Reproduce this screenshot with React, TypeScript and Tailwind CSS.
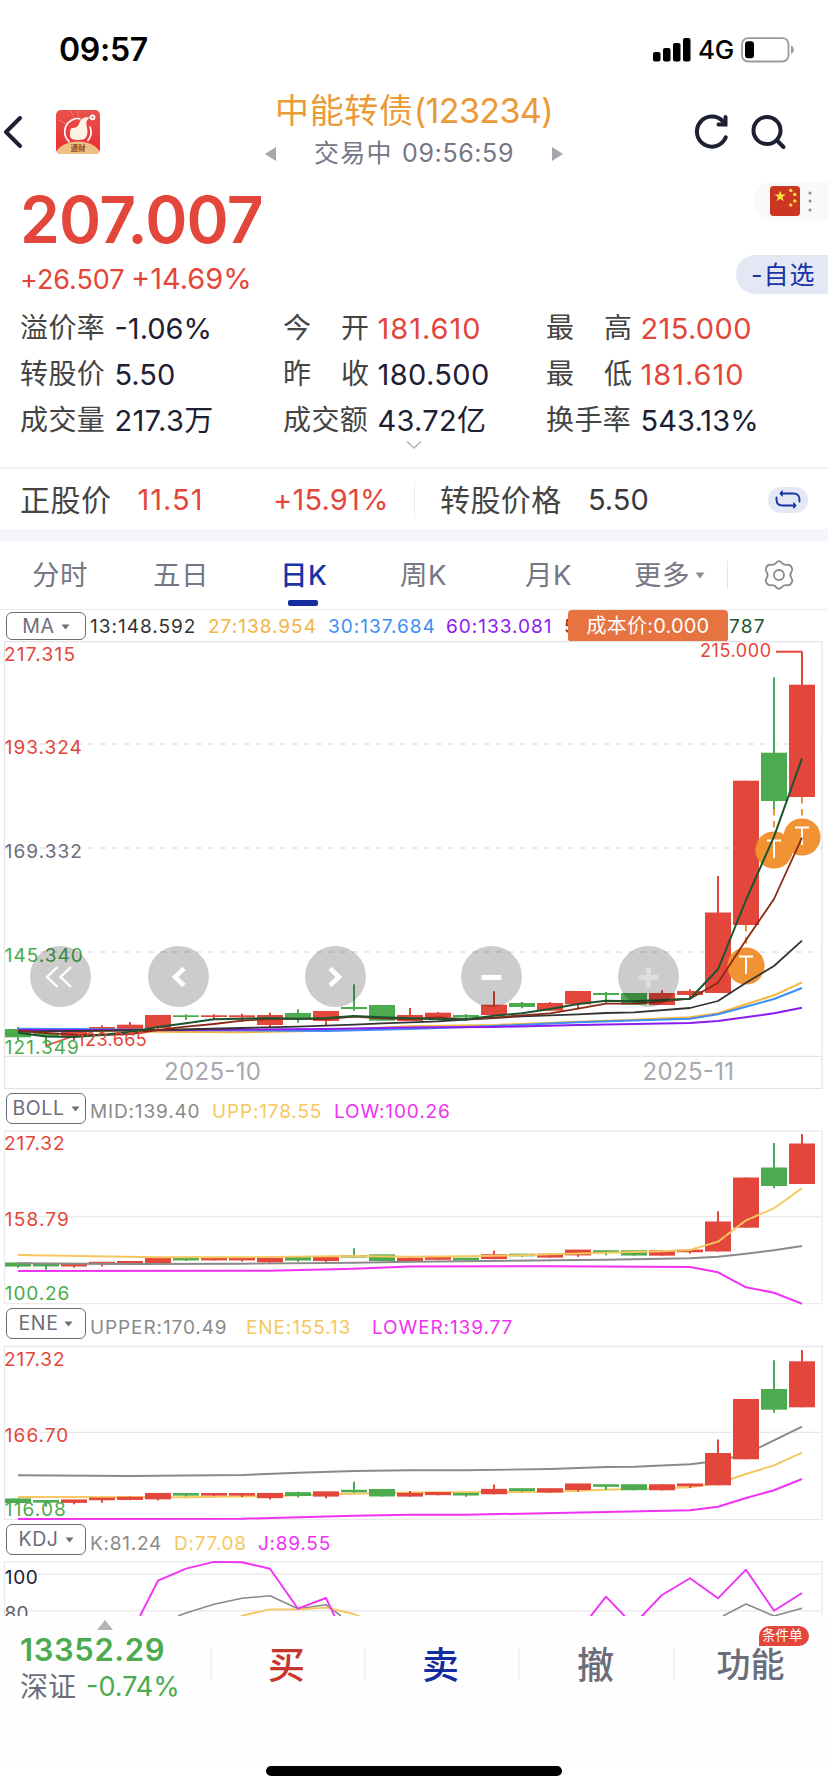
import type { ReactNode } from "react";

const RED = "#e3463a";
const GREEN = "#4cab4e";
const MAGENTA = "#f032f5";
const GOLD = "#f6c75e";
const GREY = "#8a8a8a";

type Candle = { up: boolean; top: number; bottom: number; high: number; low: number };
const c = (up: boolean, top: number, bottom: number, high: number = top, low: number = bottom): Candle => ({ up, top, bottom, high, low });

const candles: Candle[] = [
  c(false, 1029, 1037.3, 1027, 1040),
  c(false, 1033, 1036, 1032, 1046),
  c(true, 1031.5, 1037, 1031, 1040),
  c(true, 1027, 1030, 1025.3, 1036),
  c(true, 1024.7, 1029.5, 1022),
  c(true, 1015, 1028, 1015, 1030),
  c(false, 1015.3, 1017, 1014.3, 1020),
  c(true, 1015.3, 1017, 1014.3, 1019),
  c(true, 1015.3, 1017.3, 1013.7, 1022),
  c(true, 1015, 1025, 1012.7, 1027.7),
  c(false, 1013, 1019.5, 1009.3, 1022.7),
  c(true, 1011, 1021, 1011, 1025),
  c(false, 1007, 1009, 984.3, 1010.7),
  c(false, 1005, 1020.7),
  c(true, 1015, 1021, 1008),
  c(true, 1012.7, 1017.3, 1012),
  c(false, 1015, 1017.5, 1014, 1021),
  c(true, 1004.7, 1015, 991.3),
  c(false, 1003, 1007, 1002, 1008.3),
  c(true, 1003, 1010.7, 1002),
  c(true, 991, 1004.3, 991, 1008),
  c(false, 993, 995, 992, 1003),
  c(false, 993, 1004.7),
  c(true, 993, 1005, 990.3),
  c(true, 991, 995, 989.3, 998.3),
];
const mainTail: Candle[] = [
  c(true, 912.5, 993, 876),
  c(true, 780.7, 925),
  c(false, 752.7, 801, 677.3, 809),
  c(true, 684.7, 797, 651.7),
];
const bollTail: Candle[] = [
  c(true, 1221.5, 1251.5, 1211.3),
  c(true, 1177.5, 1227.7),
  c(false, 1167.5, 1186, 1143, 1188.3),
  c(true, 1143.5, 1184, 1134),
];
const eneTail: Candle[] = [
  c(true, 1453, 1485.3, 1439.5),
  c(true, 1399, 1459.3),
  c(false, 1389, 1409.7, 1360.3, 1412.7),
  c(true, 1361.3, 1407.3, 1350),
];
const rescale = (base: number, k: number) =>
  candles.map((d) => {
    const f = (y: number) => base + (y - 640) * k;
    return { up: d.up, top: f(d.top) - 0.9, bottom: Math.max(f(d.bottom) + 0.4, f(d.top) + 1.7), high: f(d.high), low: f(d.low) + 0.6 };
  });

function Candles({ data }: { data: Candle[] }) {
  return (
    <g>
      {data.map((d, i) => {
        const x = 18 + i * 28;
        return (
          <g key={i} fill={d.up ? RED : GREEN}>
            <rect x={x - 1} y={d.high} width={2} height={d.low - d.high} />
            <rect x={x - 13} y={d.top} width={26} height={d.bottom - d.top} />
          </g>
        );
      })}
    </g>
  );
}

function Line({ pts, color, w = 1.6 }: { pts: string; color: string; w?: number }) {
  return <polyline points={pts} fill="none" stroke={color} strokeWidth={w} strokeLinejoin="round" />;
}

function Label({ x, y, len, color, size = 19, children }: { x: number; y: number; len: number; color: string; size?: number; children: string }) {
  return (
    <text x={x} y={y} textLength={len} fontSize={size} fill={color}>
      {children}
    </text>
  );
}

const tSpots = [
  [774, 850],
  [802, 837],
  [746, 966],
];

function MainChart() {
  return (
    <svg className="block h-[449px] w-full" viewBox="0 641 828 449">
      <g stroke="#e3e3e6" strokeWidth="1.2" fill="none">
        <path d="M4.5 641.6H822V1088.5H4.5ZM4.5 1056.3H822" />
        <path d="M4 744H822M4 848H822M4 952H822" strokeDasharray="6 6" strokeWidth="1.6" />
      </g>
      <Candles data={[...candles, ...mainTail]} />
      <path d="M776 651.7H802" stroke={RED} strokeWidth="2" />
      <path d="M46 1045.5L74 1036" stroke={RED} strokeWidth="1.5" />
      <path d="M774 809V832M802 797V820M746 925V948" stroke="#f19333" strokeWidth="2" strokeDasharray="6.5 5.5" />
      {tSpots.map(([x, y]) => (
        <g key={x}>
          <circle cx={x} cy={y} r="18.6" fill="#f19333" />
          <path d={`M${x - 7} ${y - 9.5}h14M${x} ${y - 9.5}v17.5`} stroke="#fff" strokeWidth="2" />
        </g>
      ))}
      <Line color="#f7b53c" w={2} pts="18,1030 74,1031 158,1031.7 242,1032.3 326,1030.7 410,1026.3 494,1025 578,1021.7 634,1019.7 690,1017.3 718,1013.3 746,1004.3 774,995.3 802,982.3" />
      <Line color="#3d8ff5" w={2} pts="18,1028.7 74,1029 158,1030 326,1031 410,1029 494,1026 578,1022.3 690,1018.7 718,1014.3 746,1006.7 774,999 802,988" />
      <Line color="#8a1cf0" w={2} pts="18,1030 158,1030.3 326,1029 410,1027.5 494,1027 578,1025 690,1023 718,1021 774,1013.3 802,1007.7" />
      <Line color="#333333" w={1.8} pts="18,1031.7 74,1031 158,1030 242,1028 298,1026.7 326,1025.7 354,1024.7 382,1023.3 410,1022.3 438,1021.3 466,1019.5 494,1018 522,1016.3 578,1014.3 606,1013 634,1012.3 690,1008 718,1001 746,982.7 774,966 802,940.7" />
      <Line color="#8a2a16" w={1.8} pts="18,1030.7 46,1033 74,1034.7 102,1035 130,1034 158,1030 186,1026.7 214,1024 242,1020.7 270,1019 298,1018.7 326,1019 354,1016.7 382,1018.3 410,1019 438,1017.5 466,1019.3 494,1017.7 522,1015.3 550,1013.3 578,1008.7 606,1003.7 634,1003.7 662,1001.3 690,998.7 718,982.7 746,940 774,899 802,837.7" />
      <Line color="#1c5430" w={2} pts="18,1032.7 46,1036.5 74,1037 102,1035 130,1032 158,1027 186,1023.3 214,1019.3 242,1018.7 270,1018 298,1019 326,1018 354,1016 382,1017.3 410,1018.3 438,1019.3 466,1019.3 494,1015.7 522,1013.3 550,1009 578,1004 606,1000.7 634,1001.3 662,1000 690,998.7 718,969.3 746,900 774,836.7 802,758.3" />
      <Label x={4} y={661.3} len={71} color={RED}>217.315</Label>
      <Label x={4.8} y={753.5} len={77} color={RED}>193.324</Label>
      <Label x={4.8} y={857.5} len={77} color="#6b6d7b">169.332</Label>
      <Label x={4.8} y={961.5} len={78} color={GREEN}>145.340</Label>
      <Label x={4.8} y={1053.5} len={74} color={GREEN}>121.349</Label>
      <Label x={77.3} y={1045.5} len={69.5} size={18} color={RED}>123.665</Label>
      <Label x={700} y={657.3} len={71} size={18} color={RED}>215.000</Label>
      <Label x={164} y={1079.7} len={97} size={24} color="#a7a8b0">2025-10</Label>
      <Label x={642.5} y={1079.7} len={91.5} size={24} color="#a7a8b0">2025-11</Label>
    </svg>
  );
}

function Round({ children, className }: { children: ReactNode; className: string }) {
  return (
    <button className={"absolute top-[305px] flex size-[61px] items-center justify-center rounded-full bg-black/20 " + className}>
      <svg width="61" height="61" viewBox="0 0 61 61" fill="none" stroke="#fff">
        {children}
      </svg>
    </button>
  );
}

function BollChart() {
  return (
    <svg className="block h-[175px] w-full" viewBox="0 1130 828 175">
      <path d="M4.5 1131H822V1303.7H4.5ZM4.5 1216.5H822" stroke="#ebebee" strokeWidth="1.3" fill="none" />
      <Candles data={[...rescale(1131.5, 0.339), ...bollTail]} />
      <Line color={GREY} w={1.9} pts="18,1263.3 130,1264 242,1263.7 354,1262.7 410,1261.7 606,1259.7 690,1258.3 718,1256.7 746,1253.7 774,1250.3 802,1246" />
      <Line color={GOLD} w={1.9} pts="18,1255 158,1257.3 242,1257.3 354,1256 410,1256.7 466,1256.3 522,1255.3 550,1254.3 606,1252.7 662,1251.3 690,1250 718,1241.7 746,1220.3 774,1208.3 802,1188.3" />
      <Line color={MAGENTA} w={2} pts="18,1271 270,1270.7 354,1268.7 410,1266.5 550,1266.3 690,1267 718,1272.3 746,1287.3 774,1292.7 802,1303.7" />
      <Label x={4} y={1150.3} len={60.5} color={RED}>217.32</Label>
      <Label x={4.8} y={1226} len={64} color={RED}>158.79</Label>
      <Label x={4.8} y={1299.7} len={64.5} color={GREEN}>100.26</Label>
    </svg>
  );
}

function EneChart() {
  return (
    <svg className="block h-[176px] w-full" viewBox="0 1345 828 176">
      <path d="M4.5 1346.4H822V1519.5H4.5ZM4.5 1432.4H822" stroke="#e8e8eb" strokeWidth="1.2" fill="none" />
      <Line color={GREY} w={1.9} pts="18,1475.3 130,1476 242,1475 298,1472.7 354,1471 410,1470.3 466,1470.3 550,1469 606,1467 634,1466.7 690,1464.3 718,1461 746,1454 774,1440.3 802,1426.7" />
      <Line color={GOLD} w={1.9} pts="18,1497 186,1497.3 270,1496 354,1493.7 410,1492.5 550,1491.7 606,1489.7 690,1487.3 718,1483.3 746,1474 774,1465.3 802,1452.7" />
      <Line color={MAGENTA} w={2} pts="18,1519 242,1518.7 354,1515.7 410,1514.8 466,1514.7 606,1512 690,1510.3 718,1506.7 746,1498 774,1490.3 802,1479" />
      <Candles data={[...rescale(1346, 0.3942), ...eneTail]} />
      <Label x={4} y={1366} len={60.5} color={RED}>217.32</Label>
      <Label x={4.8} y={1441.7} len={63.5} color={RED}>166.70</Label>
      <Label x={4.8} y={1515.7} len={61} color={GREEN}>116.08</Label>
    </svg>
  );
}

function KdjChart() {
  return (
    <svg className="block h-[56px] w-full" viewBox="0 1560 828 56">
      <path d="M4.5 1620V1561.8H822V1620M4.5 1574H822M4.5 1610.8H822" stroke="#ebebee" strokeWidth="1.4" fill="none" />
      <Line color={GREY} pts="178,1616 186,1613 214,1604.3 242,1598.3 270,1595.7 298,1608.7 326,1604.7 341,1616" />
      <Line color={GREY} pts="723,1616 746,1604 774,1616 802,1608.3" />
      <Line color={GOLD} w={1.8} pts="241,1616 270,1609.3 298,1609.3 326,1607.7 354,1614 360,1616.5" />
      <Line color={MAGENTA} w={1.9} pts="140,1616 158,1580.7 186,1568.7 214,1561.9 242,1562.3 270,1568.7 298,1608.7 326,1598 335,1617" />
      <Line color={MAGENTA} w={1.9} pts="590,1617 606,1596.7 625.5,1617" />
      <Line color={MAGENTA} w={1.9} pts="641,1617 662,1595 690,1578.3 718,1598.3 746,1569.7 774,1610.7 802,1593" />
      <Label x={4.8} y={1583.5} len={33} color="#1d2033">100</Label>
      <Label x={4.5} y={1619.5} len={24} color="#5b5d6b">80</Label>
    </svg>
  );
}

function Picker({ children, className }: { children: string; className: string }) {
  return (
    <button className={"ml-[6px] flex w-[80px] shrink-0 items-center justify-center gap-[6px] rounded-[6px] border-[1.5px] border-[#6b6d7b] pt-[1px] text-[19.5px] tracking-[0.6px] text-[#6b6d7b] " + className}>
      {children}
      <svg width="9" height="6" viewBox="0 0 9 6">
        <path d="M0.5 0.5h8l-4 5z" fill="#6b6d7b" />
      </svg>
    </button>
  );
}

function IndicatorRow({ name, height, track, items }: { name: string; height: string; track: string; items: [string, string][] }) {
  return (
    <div className={"flex items-start " + height}>
      <Picker className="mt-[3px] h-[31px]">{name}</Picker>
      <div className={"flex h-[40px] items-center whitespace-nowrap pl-[4px] text-[19px] " + track}>
        {items.map(([text, cell]) => (
          <span key={text} className={cell}>{text}</span>
        ))}
      </div>
    </div>
  );
}

function Stat({ label, value, cls }: { label: string; value: string; cls: string }) {
  return (
    <div className="flex h-[46px] items-center whitespace-nowrap text-[28px]">
      <span className="flex w-[94.5px] text-[#444444]">
        {label.length === 2 ? (
          <span className="flex w-[86px] justify-between">
            <span>{label[0]}</span>
            <span>{label[1]}</span>
          </span>
        ) : (
          <span className="tracking-[0.4px]">{label}</span>
        )}
      </span>
      <span className={"text-[29px] " + cls}>{value}</span>
    </div>
  );
}

export default function App() {
  return (
    <div className="relative h-[1792px] w-[828px] overflow-hidden whitespace-nowrap bg-white font-[Inter,'Noto_Sans_CJK_SC',sans-serif] leading-none">
      <header className="flex h-[88px] items-center justify-between pl-[59px] pr-[33px] pt-[12px]">
        <span className="text-[32px] font-semibold tracking-[-0.3px]">09:57</span>
        <div className="flex items-center">
          <svg width="38" height="24" viewBox="0 0 38 24">
            <rect x="0" y="14" width="7.5" height="9.5" rx="2" />
            <rect x="10" y="10" width="7.5" height="13.5" rx="2" />
            <rect x="20" y="5" width="7.5" height="18.5" rx="2" />
            <rect x="30" y="0" width="7.5" height="23.5" rx="2" />
          </svg>
          <span className="ml-[7px] w-[43px] text-[26px] font-medium tracking-[-0.3px]">4G</span>
          <svg width="54" height="26" viewBox="0 0 54 26">
            <rect x="1" y="1.2" width="46.5" height="23.3" rx="6" fill="none" stroke="#9b9b9b" strokeWidth="1.8" />
            <rect x="4" y="4.3" width="9" height="17" rx="3" />
            <path d="M50 8.5c3.8 1.6 3.8 7 0 8.6z" fill="#9b9b9b" />
          </svg>
        </div>
      </header>

      <nav className="flex h-[88px] items-center">
        <div className="flex w-[265px] items-center">
          <svg width="56" height="44" viewBox="0 0 56 44" fill="none" stroke="#1d2033" strokeWidth="4" strokeLinecap="round" strokeLinejoin="round">
            <path d="M20 8L6 22l14 14" />
          </svg>
          <svg width="44" height="44" viewBox="0 0 44 44">
            <defs>
              <linearGradient id="app" x1="0" y1="0" x2="0" y2="1">
                <stop offset="0" stopColor="#e8524a" />
                <stop offset="1" stopColor="#ee2b34" />
              </linearGradient>
              <clipPath id="appClip"><rect width="44" height="44" rx="5" /></clipPath>
            </defs>
            <g clipPath="url(#appClip)">
              <rect width="44" height="44" fill="url(#app)" />
              <path d="M14 0l4 7M22 0v6M3 10l7 4" stroke="#f58a7d" strokeWidth="0.8" />
              <ellipse cx="22" cy="45" rx="22" ry="13.5" fill="#f0c083" />
              <path d="M13.5 32A13.2 13.2 0 0 1 24.5 8.8M33.8 16.5A13.2 13.2 0 0 1 31.5 31" fill="none" stroke="#fff" strokeWidth="1.7" />
              <path d="M14.5 20c0-1.500 1.500-2.200 4-2.200 2.500 0 4-2.300 5-5 1-4.300 5.500-6.300 10-5.300-3 2.500-3.500 5-3 8 1.300 4 1.300 9-.5 12-2 3-10 3-14 1.500-2.500-1.500-2.500-5-1.500-9z" fill="#fff3e6" />
              <circle cx="36.5" cy="7.3" r="2.9" fill="#fff" />
              <circle cx="36.5" cy="7.3" r="1.1" fill="#e8524a" />
              <text x="22" y="41" fontSize="7.5" fontWeight="700" textAnchor="middle" fill="#8a4a2a">通财</text>
            </g>
          </svg>
        </div>
        <div className="w-[298px]">
          <div className="flex h-[44px] items-center justify-center text-[34px] text-[#ea9a38]">
            <span className="tracking-[0.7px]">中能转债</span>
            <span className="tracking-[-0.6px]">(123234)</span>
          </div>
          <div className="flex h-[43px] items-center justify-between text-[25px] text-[#757785]">
            <svg width="11" height="14" viewBox="0 0 11 14"><path d="M11 0v14L0 7z" fill="#a6a7ae" /></svg>
            <span className="flex w-[200px] justify-between pb-[1px]">
              <span className="tracking-[1.3px]">交易中</span>
              <span className="tracking-[0.6px]">09:56:59</span>
            </span>
            <svg width="11" height="14" viewBox="0 0 11 14"><path d="M0 0v14l11-7z" fill="#a6a7ae" /></svg>
          </div>
        </div>
        <div className="flex pl-[129px]">
          <svg width="40" height="40" viewBox="0 0 40 40" fill="none" stroke="#1d2033" strokeWidth="4" strokeLinecap="round">
            <path d="M33.8 25.3A15 15 0 1 1 31 9.5" />
            <path d="M33.5 5v7.5H26.5" strokeLinejoin="miter" />
          </svg>
          <svg className="ml-[17px]" width="40" height="40" viewBox="0 0 40 40" fill="none" stroke="#1d2033" strokeWidth="4" strokeLinecap="round">
            <circle cx="18" cy="18.5" r="13.5" />
            <path d="M28 28.5l6.5 6.5" />
          </svg>
        </div>
      </nav>

      <section className="flex h-[129px] justify-between">
        <div className="pl-[20px]">
          <div className="flex h-[87px] items-center text-[64px] font-semibold tracking-[-0.8px] text-[#e3463a]">207.007</div>
          <div className="flex h-[34px] items-baseline text-[#e3463a]">
            <span className="w-[111px] text-[27px] leading-[34px] tracking-[-0.05px]">+26.507</span>
            <span className="text-[29px] tracking-[0px]">+14.69%</span>
          </div>
        </div>
        <div className="flex flex-col items-end pt-[6px]">
          <div className="flex h-[38px] w-[74px] items-center rounded-l-full bg-[#f9f9fa] pl-[16px]">
            <svg width="30" height="30" viewBox="0 0 30 30" fill="#fddf3f">
              <rect width="30" height="30" rx="3.5" fill="#cb3622" />
              <path d="M10.2 4.5l1.4 4h4.3l-3.4 2.6 1.2 4.2-3.5-2.5-3.5 2.5 1.2-4.2-3.4-2.6h4.3z" />
              <path d="M20.5 2.5l2 1.4-.3 2.1-2.2.1-1.2-1.9zM24.5 6.5l2 1.4-.3 2.1-2.2.1-1.2-1.9zM24.5 13l2 1.4-.3 2.1-2.2.1-1.2-1.9zM20.5 17l2 1.4-.3 2.1-2.2.1-1.2-1.9z" />
            </svg>
            <svg className="ml-[8px]" width="4" height="24" viewBox="0 0 4 24" fill="#8e8e93">
              <circle cx="2" cy="4" r="1.5" />
              <circle cx="2" cy="12" r="1.5" />
              <circle cx="2" cy="21" r="1.5" />
            </svg>
          </div>
          <div className="mt-[35px] flex h-[39px] w-[92px] items-center rounded-l-full bg-[#e4e8f4] pl-[15px] pt-[2px] text-[25px] tracking-[1px] text-[#1733a5]">-自选</div>
        </div>
      </section>

      <section className="grid grid-cols-[263px_263px_1fr] pl-[20px]">
        <Stat label="溢价率" value="-1.06%" cls="text-[#1d2033]" />
        <Stat label="今开" value="181.610" cls="tracking-[0.95px] text-[#e3463a]" />
        <Stat label="最高" value="215.000" cls="tracking-[0.35px] text-[#e3463a]" />
        <Stat label="转股价" value="5.50" cls="text-[#1d2033]" />
        <Stat label="昨收" value="180.500" cls="tracking-[0.4px] text-[#1d2033]" />
        <Stat label="最低" value="181.610" cls="tracking-[0.95px] text-[#e3463a]" />
        <Stat label="成交量" value="217.3万" cls="tracking-[0.4px] text-[#1d2033]" />
        <Stat label="成交额" value="43.72亿" cls="tracking-[0.3px] text-[#1d2033]" />
        <Stat label="换手率" value="543.13%" cls="tracking-[0.1px] text-[#1d2033]" />
      </section>
      <div className="flex h-[24px] justify-center">
        <svg className="-mt-[3px]" width="18" height="10" viewBox="0 0 18 10" fill="none" stroke="#b3b3b3" strokeWidth="1.5"><path d="M2 1.5l7 6.5 7-6.5" /></svg>
      </div>

      <div className="flex h-[62px] items-center border-t-2 border-[#f3f3f6] pt-[1px] text-[29px]">
        <span className="w-[117px] pl-[20px] text-[30px] tracking-[0.5px] text-[#444444]">正股价</span>
        <span className="w-[137px] pl-[20.5px] tracking-[1px] text-[#e3463a]">11.51</span>
        <span className="w-[160px] pl-[19px] tracking-[0.2px] text-[#e3463a]">+15.91%</span>
        <span className="h-[36px] w-[1px] bg-[#ececf0]" />
        <span className="w-[173px] pl-[25px] text-[30px] tracking-[0.4px] text-[#444444]">转股价格</span>
        <span className="w-[180px] text-[#3a3a3a]">5.50</span>
        <span className="flex h-[26px] w-[40px] items-center justify-center rounded-full bg-[#e4e8f4]">
          <svg width="28" height="22" viewBox="0 0 28 22" fill="none" stroke="#1733a5" strokeWidth="1.9" strokeLinecap="round">
            <path d="M2.5 8.5v2c0 4 2.5 6 6 6H21M25.5 12.5v-2c0-4-2.5-6-6-6H7" />
            <path d="M8 2L6 4.5 8 7zM20 14l2 2.5-2 2.5z" fill="#1733a5" strokeWidth="1" />
          </svg>
        </span>
      </div>
      <div className="h-[12px] bg-[#f4f6fb]" />

      <div className="flex h-[69px] items-center border-b border-[#ebebee] text-[27.5px] tracking-[0.6px] text-[#757785]">
        <span className="w-[120px] pl-[32px] pt-[1px]">分时</span>
        <span className="w-[160px] pl-[33px] pt-[1px]">五日</span>
        <span className="relative flex h-full w-[120px] items-center pt-[1px] font-medium text-[#1733a5]">
          日K
          <i className="absolute bottom-[3px] left-[8px] h-[6px] w-[30px] rounded-[2px] bg-[#132da0]" />
        </span>
        <span className="w-[125px] pt-[1px]">周K</span>
        <span className="w-[109px] pt-[1px]">月K</span>
        <span className="flex w-[93px] items-center gap-[5px] pt-[1px]">
          更多
          <svg width="10" height="7" viewBox="0 0 10 7"><path d="M0.5 0.5h9l-4.5 6z" fill="#8e8e96" /></svg>
        </span>
        <span className="h-[28px] w-[1px] bg-[#e5e5ea]" />
        <svg className="ml-[35px]" width="32" height="32" viewBox="0 0 32 32" fill="none" stroke="#8a8a8e" strokeWidth="1.8" strokeLinejoin="round">
          <path d="M13.4 3.6Q16 .8 18.6 3.6Q20.3 6.3 23.5 5.8Q27.5 5.2 28.9 8.8Q30 11 28.3 13Q26.4 16 28.3 19Q30 21 28.9 23.2Q27.5 26.8 23.5 26.2Q20.3 25.7 18.6 28.4Q16 31.2 13.4 28.4Q11.7 25.7 8.5 26.2Q4.5 26.8 3.1 23.2Q2 21 3.7 19Q5.6 16 3.7 13Q2 11 3.1 8.8Q4.5 5.2 8.5 5.8Q11.7 6.3 13.4 3.6Z" />
          <circle cx="16" cy="16" r="5" />
        </svg>
      </div>

      <div className="relative flex h-[31px] items-start">
        <Picker className="mt-[2px] h-[28px]">MA</Picker>
        <div className="flex h-[31px] items-center pl-[4px] pt-[1px] text-[19px] tracking-[1px]">
          <span className="w-[118px] text-[#333333]">13:148.592</span>
          <span className="w-[120px] text-[#f4b43f]">27:138.954</span>
          <span className="w-[118px] text-[#3d8ff5]">30:137.684</span>
          <span className="w-[118px] text-[#8a1cf0]">60:133.081</span>
          <span className="text-[#8a2a16]">5</span>
        </div>
        <span className="absolute left-[568px] top-0 flex h-[32px] w-[160px] items-center justify-center rounded-[4px] bg-[#e77340] text-[20px] tracking-[0.2px] text-white">成本价:0.000</span>
        <span className="absolute left-[729px] top-0 flex h-[31px] items-center pt-[1px] text-[19px] tracking-[1.2px] text-[#1c5430]">787</span>
      </div>

      <div className="relative">
        <MainChart />
        <Round className="left-[30px]"><path d="M27.5 21L17 31l10.5 10M41 21L30.5 31 41 41" strokeWidth="2.4" /></Round>
        <Round className="left-[148px]"><path d="M36 22.5L27 31l9 8.5" strokeWidth="4.5" /></Round>
        <Round className="left-[305px]"><path d="M25 22.5L34 31l-9 8.5" strokeWidth="4.5" /></Round>
        <Round className="left-[461px]"><path d="M20.5 31.5h20" strokeWidth="5" /></Round>
        <Round className="left-[618px]"><path d="M20.5 31.5h20M30.5 21.5v20" stroke="#dedede" strokeWidth="5" /></Round>
      </div>

      <IndicatorRow
        name="BOLL"
        height="h-[40px]"
        track="pt-[3px] tracking-[0.85px]"
        items={[["MID:139.40", "w-[122px] text-[#8a8a8a]"], ["UPP:178.55", "w-[122px] text-[#f6c75e]"], ["LOW:100.26", "text-[#f032f5]"]]}
      />
      <BollChart />
      <IndicatorRow
        name="ENE"
        height="h-[40px]"
        track="pt-[4px] tracking-[0.9px]"
        items={[["UPPER:170.49", "w-[156px] text-[#8a8a8a]"], ["ENE:155.13", "w-[126px] text-[#f6c75e]"], ["LOWER:139.77", "text-[#f032f5]"]]}
      />
      <EneChart />
      <IndicatorRow
        name="KDJ"
        height="h-[39px]"
        track="pt-[4px] tracking-[0.75px]"
        items={[["K:81.24", "w-[84px] text-[#8a8a8a]"], ["D:77.08", "w-[84px] text-[#f6c75e]"], ["J:89.55", "text-[#f032f5]"]]}
      />
      <KdjChart />

      <footer className="flex h-[150px] items-start bg-[#fefefe]">
        <div className="w-[210px] pl-[20px]">
          <svg className="ml-[77px] mt-[4px] block" width="16" height="10" viewBox="0 0 16 10"><path d="M8 0l8 10H0z" fill="#b4b4b4" /></svg>
          <div className="flex h-[38px] items-center text-[31px] font-semibold tracking-[0.6px] text-[#4cab4e]">13352.29</div>
          <div className="flex h-[37px] items-center text-[27px] text-[#6b6d7b]">
            <span className="w-[66px] text-[28px]">深证</span>
            <span className="text-[#4cab4e]">-0.74%</span>
          </div>
        </div>
        <div className="mt-[32px] flex h-[32px] flex-1 text-[37px] font-medium">
          <span className="flex w-[154px] items-center justify-center border-l-2 border-[#f4f4f8] pr-[3px] pt-[2px] text-[#c8352c]">买</span>
          <span className="flex w-[154px] items-center justify-center border-l-2 border-[#f4f4f8] pr-[3px] pt-[2px] text-[#132da0]">卖</span>
          <span className="flex w-[155px] items-center justify-center border-l-2 border-[#f4f4f8] pr-[2px] pt-[2px] text-[#6b6d7b]">撤</span>
          <span className="relative flex w-[154px] items-center justify-center border-l-2 border-[#f4f4f8] pr-[1px] pt-[2px] text-[34px] text-[#6b6d7b]">
            功能
            <span className="absolute -top-[22px] left-[84px] flex h-[20px] w-[50px] items-center rounded-full rounded-bl-none bg-[#e3463a] pl-[3px] text-[13.5px] font-normal text-white">条件单</span>
          </span>
        </div>
      </footer>
      <div className="mx-auto h-[10px] w-[296px] rounded-full bg-black" />
    </div>
  );
}
